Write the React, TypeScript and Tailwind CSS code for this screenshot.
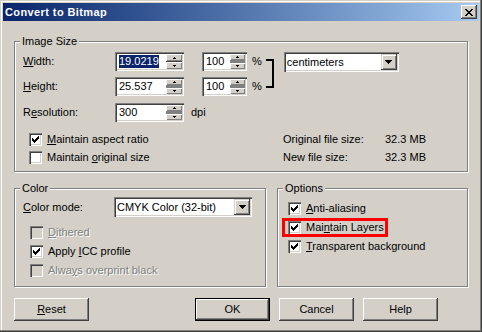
import React from 'react';

const sunken =
  'shadow-[inset_1px_1px_0_#808080,inset_2px_2px_0_#404040,inset_-1px_-1px_0_#ffffff,inset_-2px_-2px_0_#d4d0c8]';
const raised =
  'shadow-[inset_-1px_-1px_0_#404040,inset_1px_1px_0_#ffffff,inset_-2px_-2px_0_#808080]';
const raisedCombo =
  'shadow-[inset_-1px_-1px_0_#404040,inset_1px_1px_0_#d4d0c8,inset_2px_2px_0_#ffffff,inset_-2px_-2px_0_#808080]';

function Mn({ c }: { c: string }) {
  return <span className="underline decoration-1 underline-offset-[1px]">{c}</span>;
}

function CheckMark() {
  return (
    <svg className="absolute left-[3px] top-[3px]" width="7" height="7" viewBox="0 0 7 7" shapeRendering="crispEdges">
      <path
        d="M0 2h1v3H0zM1 3h1v3H1zM2 4h1v3H2zM3 3h1v3H3zM4 2h1v3H4zM5 1h1v3H5zM6 0h1v3H6z"
        fill="#000"
      />
    </svg>
  );
}

function Check({ checked, disabled }: { checked?: boolean; disabled?: boolean }) {
  return (
    <span
      className={`relative inline-block w-[13px] h-[13px] shrink-0 ${disabled ? 'bg-[#d4d0c8]' : 'bg-white'} ${sunken}`}
    >
      {checked && <CheckMark />}
    </span>
  );
}

function CheckRow({
  checked,
  disabled,
  children,
  highlight,
}: {
  checked?: boolean;
  disabled?: boolean;
  children: React.ReactNode;
  highlight?: boolean;
}) {
  return (
    <div className="relative flex items-center h-[13px]">
      {highlight && (
        <span className="absolute left-[-6px] top-[-3px] w-[106px] h-[19px] border-[3px] border-[#ff0000]" />
      )}
      <Check checked={checked} disabled={disabled} />
      <span
        className={`ml-[5px] leading-[13px] whitespace-nowrap ${disabled ? 'text-[#808080] [text-shadow:1px_1px_0_#ffffff]' : ''}`}
      >
        {children}
      </span>
    </div>
  );
}

function UpArrow() {
  return (
    <svg width="3" height="2" viewBox="0 0 3 2" shapeRendering="crispEdges">
      <path d="M1 0h1v1h1v1H0V1h1z" fill="#000" />
    </svg>
  );
}
function DownArrow() {
  return (
    <svg width="3" height="2" viewBox="0 0 3 2" shapeRendering="crispEdges">
      <path d="M0 0h3v1H2v1H1V1H0z" fill="#000" />
    </svg>
  );
}

function Spinner({ focused, w }: { focused?: boolean; w: string }) {
  return (
    <div className={`flex flex-col h-full ${w}`}>
      <div className={`flex items-center justify-center bg-[#d4d0c8] ${focused ? 'h-[7px]' : 'h-[6px]'} shadow-[inset_1px_1px_0_#ffffff,inset_-1px_-1px_0_#808080]`}>
        <UpArrow />
      </div>
      <div className={`${focused ? 'h-[1px] bg-[#404040]' : 'h-[3px] bg-[#808080]'}`} />
      <div className={`flex items-center justify-center bg-[#d4d0c8] ${focused ? 'h-[7px]' : 'h-[6px]'} shadow-[inset_1px_1px_0_#ffffff,inset_-1px_-1px_0_#808080]`}>
        <DownArrow />
      </div>
    </div>
  );
}

function SpinInput({
  w,
  sw,
  value,
  selected,
}: {
  w: string;
  sw: string;
  value: string;
  selected?: boolean;
}) {
  return (
    <div className={`flex h-[19px] p-[2px] bg-white shrink-0 ${sunken} ${w}`}>
      <div className="flex-1 flex items-center pl-[2px]">
        {selected ? (
          <span className="bg-[#0a246a] text-white leading-[13px]">{value}</span>
        ) : (
          <span className="leading-[13px]">{value}</span>
        )}
      </div>
      <Spinner focused={selected} w={sw} />
    </div>
  );
}

function Combo({ w, value }: { w: string; value: string }) {
  return (
    <div className={`flex h-[20px] p-[2px] bg-white shrink-0 ${sunken} ${w}`}>
      <div className="flex-1 flex items-center pl-[1px] leading-[13px] whitespace-nowrap">{value}</div>
      <div className={`w-[16px] h-full bg-[#d4d0c8] flex items-center justify-center ${raisedCombo}`}>
        <svg width="7" height="4" viewBox="0 0 7 4" shapeRendering="crispEdges">
          <path d="M0 0h7v1H6v1H5v1H4v1H3V3H2V2H1V1H0z" fill="#000" />
        </svg>
      </div>
    </div>
  );
}

function Group({
  title,
  className,
  children,
}: {
  title: string;
  className: string;
  children: React.ReactNode;
}) {
  return (
    <div
      className={`relative border border-[#808080] shadow-[inset_1px_1px_0_#ffffff,1px_1px_0_#ffffff] ${className}`}
    >
      <span className="absolute left-[5px] top-[-7px] px-[2px] bg-[#d4d0c8] leading-[13px]">{title}</span>
      {children}
    </div>
  );
}

function Button({ children, def, className }: { children: React.ReactNode; def?: boolean; className?: string }) {
  if (def) {
    return (
      <div className={`w-[75px] h-[23px] border border-black ${className ?? ''}`}>
        <div className={`w-full h-full flex items-center justify-center bg-[#d4d0c8] ${raised}`}>{children}</div>
      </div>
    );
  }
  return (
    <div className={`w-[75px] h-[23px] flex items-center justify-center bg-[#d4d0c8] ${raised} ${className ?? ''}`}>
      {children}
    </div>
  );
}

export default function App() {
  return (
    <div
      className={`w-[482px] h-[332px] bg-[#d4d0c8] p-[3px] flex flex-col text-[11px] text-black font-['Liberation_Sans',Arial,sans-serif] shadow-[inset_-1px_-1px_0_#404040,inset_-2px_-2px_0_#808080,inset_1px_1px_0_#d4d0c8,inset_2px_2px_0_#ffffff]`}
    >
      {/* Title bar */}
      <div className="h-[18px] flex items-center justify-between pl-[2px] pr-[2px] bg-linear-to-r from-[#0a246a] to-[#a6caf0]">
        <span className="font-bold text-white text-[11px] tracking-[0.4px] leading-[13px]">Convert to Bitmap</span>
        <div className={`w-[16px] h-[14px] bg-[#d4d0c8] flex items-center justify-center ${raised}`}>
          <svg width="8" height="7" viewBox="0 0 8 7" shapeRendering="crispEdges">
            <path
              d="M0 0h2v1H0zM6 0h2v1H6zM1 1h2v1H1zM5 1h2v1H5zM2 2h4v1H2zM3 3h2v1H3zM2 4h4v1H2zM1 5h2v1H1zM5 5h2v1H5zM0 6h2v1H0zM6 6h2v1H6z"
              fill="#000"
            />
          </svg>
        </div>
      </div>

      <div className="flex flex-col px-[11px]">
        {/* Image Size */}
        <Group title="Image Size" className="mt-[20px] h-[131px] pt-[10px] pl-[8px]">
          <div className="flex">
            <div className="flex flex-col gap-[6px]">
              <div className="flex items-center h-[19px]">
                <span className="w-[92px]">
                  <Mn c="W" />idth:
                </span>
                <SpinInput w="w-[69px]" sw="w-[16px]" value="19.0219" selected />
                <SpinInput w="w-[45px] ml-[18px]" sw="w-[15px]" value="100" />
                <span className="ml-[5px]">%</span>
              </div>
              <div className="flex items-center h-[19px]">
                <span className="w-[92px]">
                  <Mn c="H" />eight:
                </span>
                <SpinInput w="w-[69px]" sw="w-[16px]" value="25.537" />
                <SpinInput w="w-[45px] ml-[18px]" sw="w-[15px]" value="100" />
                <span className="ml-[5px]">%</span>
              </div>
            </div>
            <div className="ml-[4px] mt-[7px] w-[8px] h-[29px] border-2 border-l-0 border-black" />
            <Combo w="w-[115px] ml-[10px]" value="centimeters" />
          </div>

          <div className="flex items-center h-[19px] mt-[7px]">
            <span className="w-[92px]">
              R<Mn c="e" />solution:
            </span>
            <SpinInput w="w-[69px]" sw="w-[16px]" value="300" />
            <span className="ml-[7px]">dpi</span>
          </div>

          <div className="flex mt-[11px]">
            <div className="w-[260px] pl-[6px] flex flex-col gap-[5px]">
              <CheckRow checked>
                <Mn c="M" />aintain aspect ratio
              </CheckRow>
              <CheckRow>
                Maintain <Mn c="o" />riginal size
              </CheckRow>
            </div>
            <div className="flex flex-col gap-[5px]">
              <div className="flex items-center h-[13px]">
                <span className="w-[102px]">Original file size:</span>
                <span>32.3 MB</span>
              </div>
              <div className="flex items-center h-[13px]">
                <span className="w-[102px]">New file size:</span>
                <span>32.3 MB</span>
              </div>
            </div>
          </div>
        </Group>

        {/* Color + Options */}
        <div className="flex gap-[11px] mt-[16px]">
          <Group title="Color" className="w-[252px] h-[99px] pt-[8px] pl-[8px]">
            <div className="flex items-center h-[20px]">
              <span className="w-[91px]">
                <Mn c="C" />olor mode:
              </span>
              <Combo w="w-[138px]" value="CMYK Color (32-bit)" />
            </div>
            <div className="flex flex-col gap-[6px] mt-[9px] pl-[7px]">
              <CheckRow disabled>
                <Mn c="D" />ithered
              </CheckRow>
              <CheckRow checked>
                Apply <Mn c="I" />CC profile
              </CheckRow>
              <CheckRow disabled>
                Alwa<Mn c="y" />s overprint black
              </CheckRow>
            </div>
          </Group>
          <Group title="Options" className="flex-1 h-[99px] pt-[13px] pl-[10px]">
            <div className="flex flex-col gap-[6px]">
              <CheckRow checked>
                <Mn c="A" />nti-aliasing
              </CheckRow>
              <CheckRow checked highlight>
                Mai<Mn c="n" />tain Layers
              </CheckRow>
              <CheckRow checked>
                <Mn c="T" />ransparent background
              </CheckRow>
            </div>
          </Group>
        </div>

        {/* Buttons */}
        <div className="flex mt-[11px]">
          <Button>
            <Mn c="R" />eset
          </Button>
          <Button def className="ml-[106px]">
            OK
          </Button>
          <Button className="ml-[9px]">Cancel</Button>
          <Button className="ml-[9px]">Help</Button>
        </div>
      </div>
    </div>
  );
}
